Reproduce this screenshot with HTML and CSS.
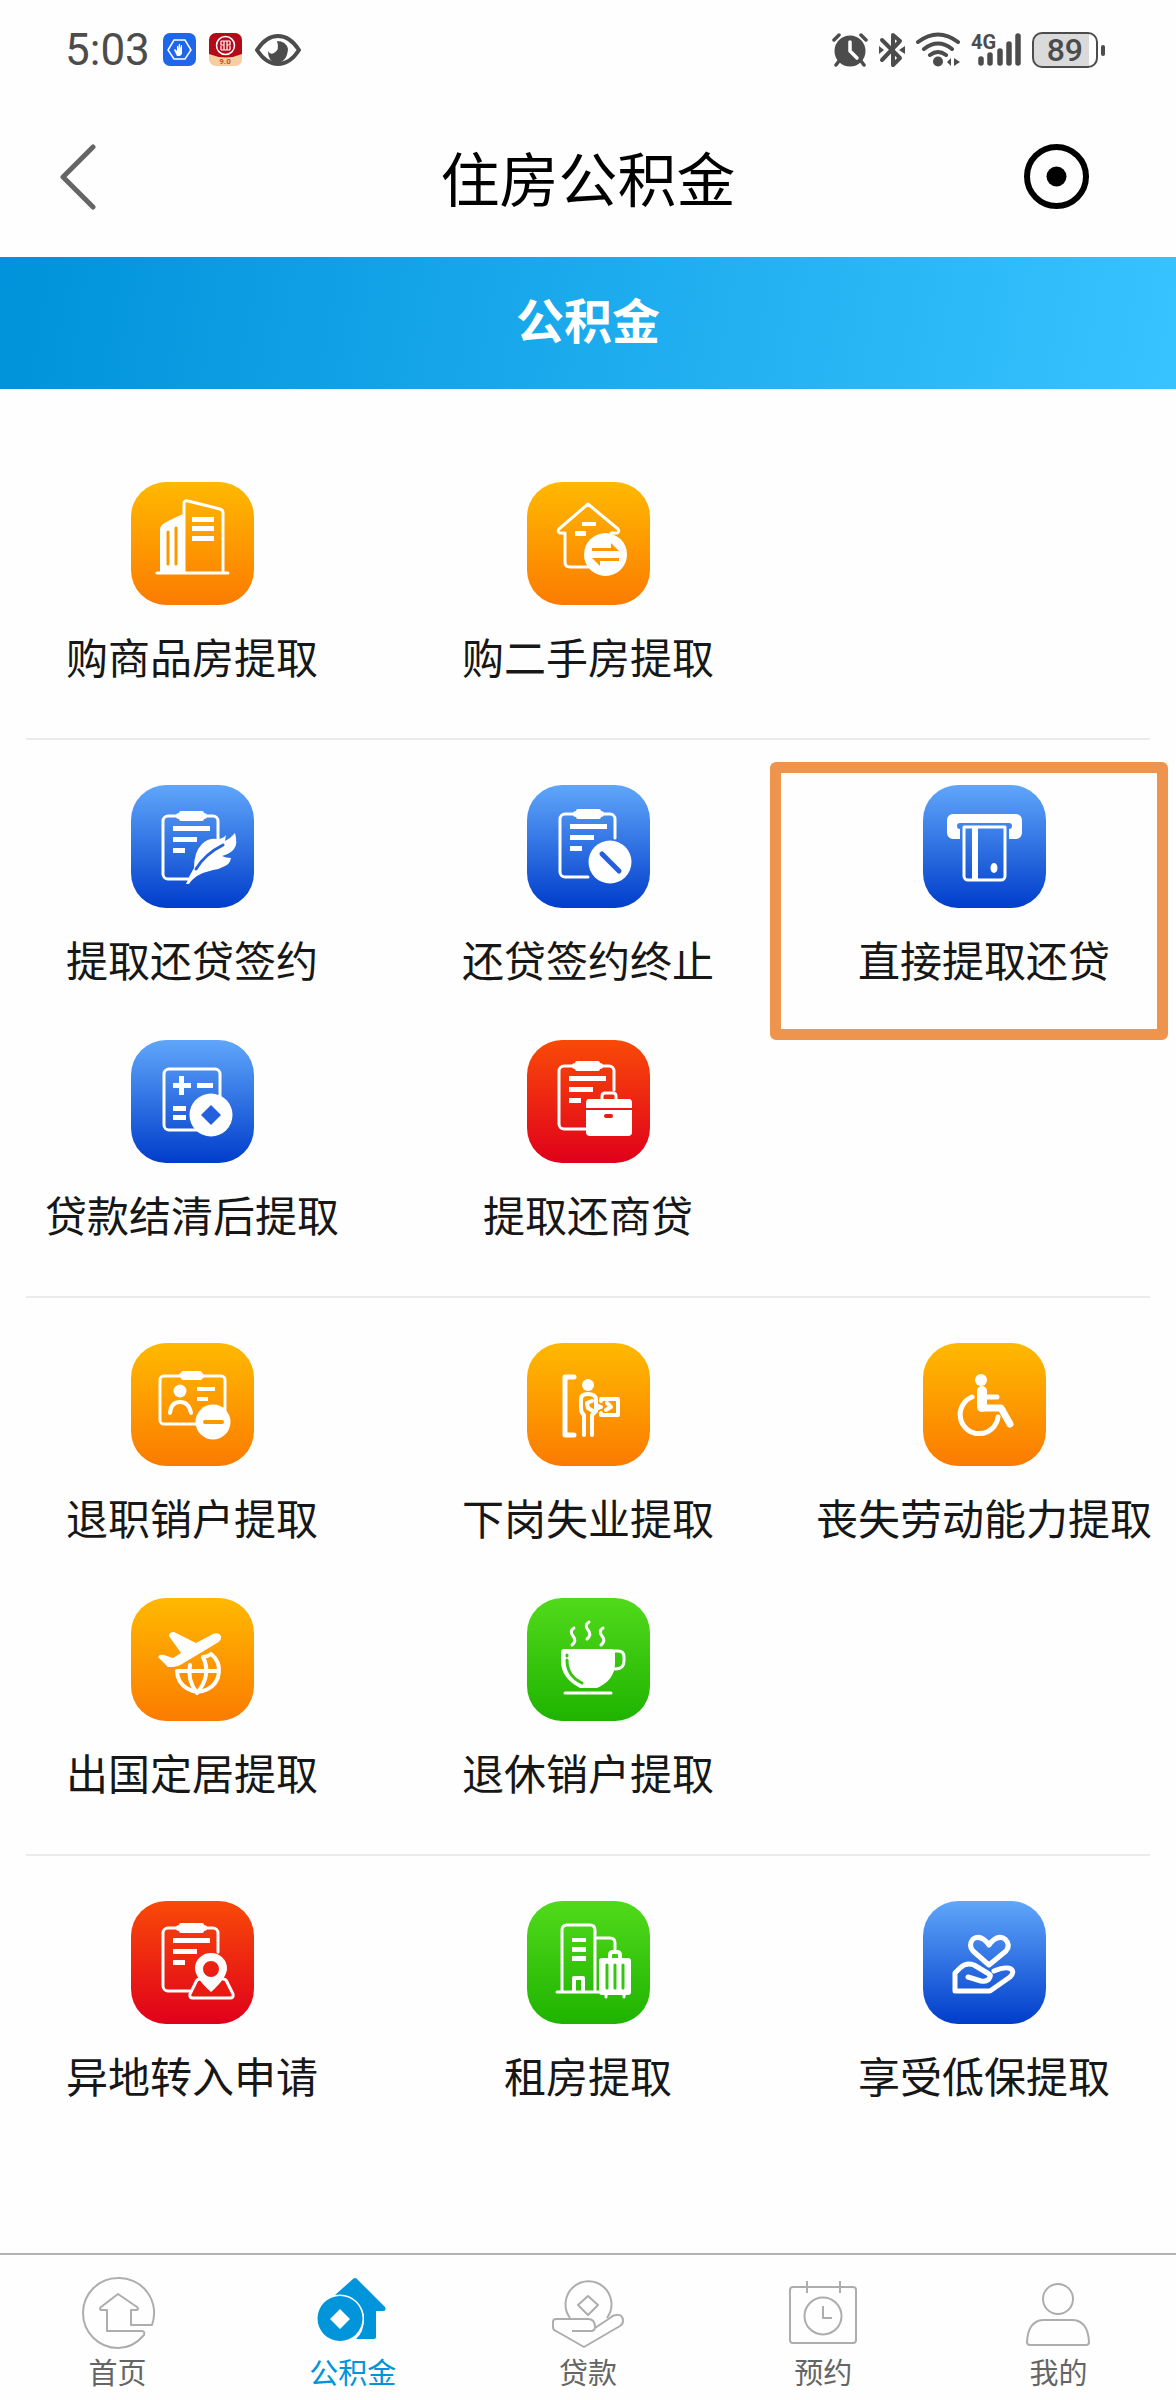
FILE: index.html
```html
<!DOCTYPE html>
<html lang="zh-CN">
<head>
    <meta charset="UTF-8">
    <meta name="viewport" content="width=device-width, initial-scale=1.0">
    <title>住房公积金</title>
    <link rel="stylesheet" href="styles.css">
</head>
<body>

<!-- 公用的剪贴板图形 -->
<svg class="sprite" aria-hidden="true">
    <symbol id="clipboard" viewBox="0 0 123 123">
        <path class="line" d="M87 55V36a5 5 0 0 0-5-5H37a5 5 0 0 0-5 5v53a5 5 0 0 0 5 5h23"/>
        <path class="fill" d="M50 26h21q2 0 2 2 3 0 3 3t-3 3q0 2-2 2H50q-2 0-2-2-3 0-3-3t3-3q0-2 2-2zM42 41h37v5H42zM42 52h24v5H42zM42 63h12v5H42z"/>
    </symbol>
</svg>

<div class="status-bar">
    <div class="status-group status-left">
        <span class="clock">5:03</span>
        <svg class="app-icon" width="33" height="33" viewBox="0 0 33 33">
            <rect width="33" height="33" rx="7" fill="#1f66ea"/>
            <path d="M11 7h11l6 10-6 9H11L5 17z" fill="none" stroke="#fff" stroke-width="1.5"/>
            <path d="M13 21l-2-4 1-1 2 2v-5h1v3l1-5h1v5l1-4h1v9l-2 2h-3z" fill="#fff"/>
        </svg>
        <svg class="app-icon" width="33" height="33" viewBox="0 0 33 33">
            <rect width="33" height="33" rx="7" fill="#f8cda0"/>
            <path d="M7 0h19a7 7 0 0 1 7 7v14q-16 7-33 0V7a7 7 0 0 1 7-7z" fill="#b20a18"/>
            <circle cx="16.500" cy="12.500" r="9" fill="none" stroke="#fff" stroke-width="1.500"/>
            <path d="M12 8h9M12 17h9M12 8v4h3v5M21 8v4h-3v5M15 8v4M18 8v4M12 13v4M21 13v4" fill="none" stroke="#fff" stroke-width="1.200"/>
            <text x="16" y="31" class="app-version">9.0</text>
        </svg>
        <svg width="46" height="32" viewBox="0 0 46 32">
            <path d="M2 16Q11 2 23 2t21 14Q35 30 23 30T2 16z" fill="none" stroke="#4c4c4c" stroke-width="4"/>
            <path d="M22 7q9 0 11 8-1 13-11 14-9-1-9-12 2 4 6 2 6-3 3-12z" fill="#4c4c4c"/>
        </svg>
    </div>
    <div class="status-group">
        <svg width="36" height="35" viewBox="0 0 36 35">
            <circle cx="18" cy="19" r="15.500" fill="#4c4c4c"/>
            <path d="M2 8l5-5M34 8l-5-5M7 29l-3 4M29 29l3 4" stroke="#4c4c4c" stroke-width="3.500" stroke-linecap="round"/>
            <path d="M18 10v9l7 7" fill="none" stroke="#fff" stroke-width="3.500" stroke-linecap="round" stroke-linejoin="round"/>
        </svg>
        <svg width="26" height="36" viewBox="0 0 26 36">
            <path d="M3 8l18 18-7 7V3l7 6L3 28" fill="none" stroke="#4c4c4c" stroke-width="4" stroke-linecap="round" stroke-linejoin="round"/>
            <path d="M0 14l5 4-5 4zM26 14l-6 4 6 4z" fill="#4c4c4c"/>
        </svg>
        <svg width="44" height="35" viewBox="0 0 44 35">
            <path d="M2 10Q22-5 42 10M8 17q14-11 28 0M14 23q8-6 16 0" fill="none" stroke="#4c4c4c" stroke-width="4" stroke-linecap="round"/>
            <circle cx="22" cy="29.500" r="5" fill="#4c4c4c"/>
            <path d="M35 26v8l-4-4zM38 26v8l6-4z" fill="#4c4c4c"/>
        </svg>
        <svg width="50" height="45" viewBox="0 -6 50 45">
            <text x="0" y="16" class="network">4G</text>
            <path d="M10 26v4M19 22v8M29 18v12M38 11v19M47 3v27" stroke="#4c4c4c" stroke-width="5.500" stroke-linecap="round"/>
        </svg>
        <div class="battery"><span class="battery-level">89</span></div>
    </div>
</div>

<header class="header">
    <button class="header-btn back" aria-label="返回">
        <svg width="36" height="66" viewBox="0 0 36 66">
            <path d="M33 3L3 33l30 30" fill="none" stroke="#656565" stroke-width="5" stroke-linecap="round" stroke-linejoin="round"/>
        </svg>
    </button>
    <h1 class="header-title">住房公积金</h1>
    <button class="header-btn" aria-label="关闭">
        <svg width="65" height="65" viewBox="0 0 65 65">
            <circle cx="32.500" cy="32.500" r="29.500" fill="none" stroke="#000" stroke-width="6"/>
            <circle cx="32.500" cy="32.500" r="10" fill="#000"/>
        </svg>
    </button>
</header>

<h2 class="banner">公积金</h2>

<main class="content">
    <section class="group">
        <a href="#" class="item">
            <svg class="icon orange" viewBox="0 0 123 123">
                <path class="fill" d="M29 90V47q0-3 3-5l7-4 13-6v58z"/>
                <path class="line" d="M53 90V22q0-4 4-3l32 8q3 1 3 4v59"/>
                <path class="fill" d="M61 35h22v5H61zM61 44h22v5H61zM61 54h22v5H61z"/>
                <path class="cut" d="M37 50v32M45 46v36" stroke-width="3"/>
                <path class="line" d="M26 91h71"/>
            </svg>
            <span class="label">购商品房提取</span>
        </a>
        <a href="#" class="item">
            <svg class="icon orange" viewBox="0 0 123 123">
                <path class="line" d="M61 85H43q-5 0-5-5V51h-5q-3-1-1-4l29-25 30 25q2 3-1 4h-6v8"/>
                <path class="fill" d="M55 40h14v4H55zM48 49h11v5H48z"/>
                <circle class="fill" cx="78.500" cy="72.500" r="21.500"/>
                <path class="cut-fill" d="M65 66h19v-5l8 8H65zM92 76H65l8 8v-5h19z"/>
            </svg>
            <span class="label">购二手房提取</span>
        </a>
    </section>

    <section class="group">
        <a href="#" class="item">
            <svg class="icon blue" viewBox="0 0 123 123">
                <use href="#clipboard"/>
                <path class="fill" d="M55 99q3-8 8-16 0-16 8-24 6-6 15-5 6 0 9-4l-1 6q6-3 10-8 3 11-1 16-4 5-12 7 4 2 9 2-1 6-6 8-5 3-12 4-9 2-16 6-5 3-8 8z"/>
                <path class="cut" d="M65 84q9-15 27-24" stroke-width="3"/>
            </svg>
            <span class="label">提取还贷签约</span>
        </a>
        <a href="#" class="item">
            <svg class="icon blue" viewBox="0 0 123 123">
                <use href="#clipboard" x="1" y="-2"/>
                <circle class="fill" cx="83" cy="77" r="21.500"/>
                <path class="cut" d="M75 69l17 17" stroke-width="5"/>
            </svg>
            <span class="label">还贷签约终止</span>
        </a>
        <a href="#" class="item highlight">
            <svg class="icon blue" viewBox="0 0 123 123">
                <path class="fill" d="M30 29h63a6 6 0 0 1 6 6v13a6 6 0 0 1-6 6h-7V44q3 0 3-3t-3-3H37q-3 0-3 3t3 3v10h-7a6 6 0 0 1-6-6V35a6 6 0 0 1 6-6z"/>
                <path class="line" d="M41 42h41v49a4 4 0 0 1-4 4H45a4 4 0 0 1-4-4z"/>
                <path class="fill" d="M49 42h6v54h-6z"/>
                <ellipse class="fill" cx="71" cy="83" rx="3.500" ry="5"/>
            </svg>
            <span class="label">直接提取还贷</span>
        </a>
        <a href="#" class="item">
            <svg class="icon blue" viewBox="0 0 123 123">
                <rect class="line" x="33" y="29" width="56" height="61" rx="5"/>
                <path class="fill" d="M42 43h6v-7h5v7h7v5h-7v7h-5v-7h-6zM66 43h16v5H66zM42 66h13v5H42zM42 75h13v5H42z"/>
                <circle class="fill" cx="80" cy="75" r="21.500"/>
                <path class="cut-fill" d="M80 65l10 10-10 10-10-10z"/>
            </svg>
            <span class="label">贷款结清后提取</span>
        </a>
        <a href="#" class="item">
            <svg class="icon red" viewBox="0 0 123 123">
                <use href="#clipboard" y="-5"/>
                <path class="line" d="M75 59v-3q0-3 3-3h8q3 0 3 3v3"/>
                <path class="fill" d="M62 59h40q3 0 3 4v29q0 4-4 4H63q-4 0-4-4V63q0-4 3-4z"/>
                <path class="cut" d="M58 69h48" stroke-width="2"/>
                <path class="cut" d="M79 76h5" stroke-width="4"/>
            </svg>
            <span class="label">提取还商贷</span>
        </a>
    </section>

    <section class="group">
        <a href="#" class="item">
            <svg class="icon orange" viewBox="0 0 123 123">
                <rect class="line" x="29" y="33" width="65" height="48" rx="4"/>
                <path class="fill" d="M52 28h17q2 0 2 2 2 1 2 3t-2 3q0 1-2 1H52q-2 0-2-2-2-1-2-3t2-2q0-2 2-2zM66 44h18v4H66zM66 54h11v4H66z"/>
                <circle class="fill" cx="49" cy="48" r="6.500"/>
                <path class="line" d="M39 70q1-11 10-11t11 11" stroke-width="4"/>
                <circle class="fill" cx="82" cy="79" r="17.500"/>
                <path class="cut" d="M74 79h17" stroke-width="4"/>
            </svg>
            <span class="label">退职销户提取</span>
        </a>
        <a href="#" class="item">
            <svg class="icon orange" viewBox="0 0 123 123">
                <path class="line" d="M47 34H38v58h9" stroke-width="5"/>
                <circle class="fill" cx="61" cy="42" r="6"/>
                <path class="line" d="M57 92V72q-3-2-3-7V56q0-5 7-5t8 5v12l-4 4v20M65 58l-5 2 1 5 5 3" stroke-width="4"/>
                <path class="line" d="M69 62l5 2-5 2M74 58v-2h17v16H74v-2M80 60l4 4-5 3" stroke-width="4"/>
            </svg>
            <span class="label">下岗失业提取</span>
        </a>
        <a href="#" class="item">
            <svg class="icon orange" viewBox="0 0 123 123">
                <circle class="fill" cx="58" cy="37" r="6"/>
                <path class="line" d="M59 48v16" stroke-width="10"/>
                <path class="line" d="M59 65h19l9 16" stroke-width="7"/>
                <path class="line" d="M60 54h14M49 54a19 19 0 1 0 26 20" stroke-width="5"/>
            </svg>
            <span class="label">丧失劳动能力提取</span>
        </a>
        <a href="#" class="item">
            <svg class="icon orange" viewBox="0 0 123 123">
                <path class="fill" d="M38 38q0-4 5-4l22 11 17-9q6-2 8 2 1 4-4 7L51 66q-4 3-9 3h-5L27 59q1-3 6-2l9 3 8-5z"/>
                <path class="line" d="M46 73a21 21 0 1 0 34-17M47 73h41M59 67q-3 15 7 28M72 59q9 18-6 36M80 56q-4 3-8 3" stroke-width="4"/>
            </svg>
            <span class="label">出国定居提取</span>
        </a>
        <a href="#" class="item">
            <svg class="icon green" viewBox="0 0 123 123">
                <path class="fill" d="M37 51h47q4 0 4 4v10q0 17-18 25H53Q34 80 34 63v-8q0-4 3-4z"/>
                <path class="line" d="M87 53h4q6 0 6 6v4q0 8-9 8"/>
                <path class="cut" d="M40 57v1M40 62q0 16 15 23" stroke-width="3"/>
                <path class="line" d="M38 95h46"/>
                <path class="line" d="M47 30q-5 3-1 8t-1 9M62 24q-5 3-1 8t-1 9M76 30q-5 3-1 8t-1 9"/>
            </svg>
            <span class="label">退休销户提取</span>
        </a>
    </section>

    <section class="group">
        <a href="#" class="item">
            <svg class="icon red" viewBox="0 0 123 123">
                <use href="#clipboard" y="-4"/>
                <path class="cut-fill" d="M66 78l-8 16q-1 4 3 4h38q5 0 3-5l-7-15z"/>
                <path class="line" d="M69 78q-3 0-4 3l-6 12q-1 4 3 4h37q4 0 3-4l-6-12q-1-3-4-3"/>
                <path class="fill" fill-rule="evenodd" d="M80 91Q64 77 64 67a16 15 0 0 1 32 0q0 10-16 24zM80 60a8 8 0 1 0 0 16 8 8 0 1 0 0-16z"/>
            </svg>
            <span class="label">异地转入申请</span>
        </a>
        <a href="#" class="item">
            <svg class="icon green" viewBox="0 0 123 123">
                <path class="line" d="M30 91h42M35 90V29q0-5 5-5h23q5 0 5 5v61M69 37h14q5 0 5 5v8"/>
                <path class="fill" d="M45 37h14v4H45zM45 46h14v5H45zM45 55h14v5H45z"/>
                <path class="line" d="M47 90V77h9v13M83 58v-4q0-3 3-3h4q3 0 3 3v4" stroke-width="4"/>
                <rect class="fill" x="72" y="57" width="32" height="37" rx="3"/>
                <path class="cut" d="M80 64v23M88 64v23M96 64v23" stroke-width="3"/>
                <path class="line" d="M79 94v2M97 94v2"/>
            </svg>
            <span class="label">租房提取</span>
        </a>
        <a href="#" class="item">
            <svg class="icon blue" viewBox="0 0 123 123">
                <path class="line" d="M66 64L50 50q-5-6 0-12 8-5 16 6 8-11 16-6 6 6 1 12z" stroke-width="5"/>
                <path class="line" d="M45 76l13 4q7 1 9-4 1-2-1-3L51 64q-8-3-14 3l-5 5v18h35l20-14q5-5 1-8-5-3-17 2" stroke-width="5"/>
            </svg>
            <span class="label">享受低保提取</span>
        </a>
    </section>
</main>

<nav class="tabbar">
    <a href="#" class="tab">
        <svg class="tab-icon" viewBox="0 0 72 72">
            <path d="M70 48A35 35 0 0 0 36 1 35 35 0 0 0 1 36 35 35 0 0 0 36 71q15 0 26-13 1-4-2-4H25V33h-6q-2-1 0-3l17-13 19 13q2 2 0 3h-6v15z"/>
        </svg>
        <span>首页</span>
    </a>
    <a href="#" class="tab active">
        <svg class="tab-icon" viewBox="0 0 72 72">
            <path class="solid" d="M18 18L36 2q2-2 4 0l28 28q2 4-2 4h-7v26q0 2-2 2H39q8-7 8-20 0-20-29-24z"/>
            <path class="solid" fill-rule="evenodd" d="M23 19a22 22 0 1 0 0 45 22 22 0 1 0 0-45zM23 32l10 10-10 10-10-10z"/>
        </svg>
        <span>公积金</span>
    </a>
    <a href="#" class="tab">
        <svg class="tab-icon" viewBox="0 0 72 72">
            <path d="M18 41a23 23 0 1 1 37 0M36 19l10 9-10 10-10-10z"/>
            <path d="M20 54h19q4 0 4-4 0-8-7-8H4q-3 0-3 3v5q0 3 3 4l28 16 36-21q3-2 3-5 0-7-7-6-3 0-6 3L43 51"/>
        </svg>
        <span>贷款</span>
    </a>
    <a href="#" class="tab">
        <svg class="tab-icon" viewBox="0 0 72 72">
            <rect x="3" y="10" width="66" height="56" rx="3"/>
            <path d="M20 4v12M53 4v12M36 29v12h9"/>
            <circle cx="36" cy="39" r="18.500"/>
        </svg>
        <span>预约</span>
    </a>
    <a href="#" class="tab">
        <svg class="tab-icon" viewBox="0 0 72 72">
            <circle cx="36" cy="22" r="15"/>
            <path d="M5 65q1-21 16-22h30q15 1 16 22 0 3-3 3H8q-3 0-3-3z"/>
        </svg>
        <span>我的</span>
    </a>
</nav>

</body>
</html>
```
FILE: styles.css
```css
:root {
    --text: #171717;
    --status: #4c4c4c;
    --accent: #0095da;
    --tab-grey: #adadad;
    --mark: #ef944d;
}

* {
    box-sizing: border-box;
    margin: 0;
    padding: 0;
}

body {
    display: flex;
    flex-direction: column;
    min-height: 100vh;
    font-family: "Noto Sans CJK SC", sans-serif;
    background-color: #fefefe;
    color: var(--text);
}

a {
    color: inherit;
    text-decoration: none;
}

.sprite {
    display: none;
}

/* 状态栏 */
.status-bar {
    display: flex;
    justify-content: space-between;
    align-items: center;
    height: 99px;
    padding: 0 71px 0 65px;
    color: var(--status);
    font-family: Roboto, sans-serif;
}

.status-group {
    display: flex;
    align-items: center;
    gap: 11px;
}

.status-left {
    gap: 13px;
}

.clock {
    font-size: 44px;
    line-height: 48px;
}

.app-version {
    font-size: 8px;
    font-weight: 700;
    fill: #c4522c;
    text-anchor: middle;
}

.network {
    font-size: 20px;
    font-weight: 700;
    fill: var(--status);
}

.battery {
    position: relative;
    display: flex;
    margin-right: 7px;
    border: 2px solid var(--status);
    border-radius: 10px;
    background: linear-gradient(90deg, #dadada 88%, #fff 88%);
}

.battery::after {
    content: "";
    position: absolute;
    top: 11px;
    right: -9px;
    width: 4px;
    height: 11px;
    border-radius: 2px;
    background-color: var(--status);
}

.battery-level {
    padding: 0 13px;
    font-size: 32px;
    font-weight: 500;
    line-height: 32px;
}

/* 标题栏 */
.header {
    display: flex;
    align-items: center;
    height: 158px;
    padding: 0 87px 3px 60px;
}

.header-btn {
    display: flex;
    border: none;
    background: none;
    cursor: pointer;
}

.back {
    width: 92px;
}

.header-title {
    flex: 1;
    color: #000;
    font-size: 59px;
    font-weight: 400;
    line-height: 80px;
    text-align: center;
}

.banner {
    padding: 29px 0 39px;
    background: linear-gradient(100deg, #0092da, #37c3ff);
    color: #fff;
    font-size: 48px;
    font-weight: 700;
    line-height: 64px;
    text-align: center;
}

/* 业务列表 */
.content {
    flex: 1;
    padding: 48px 26px;
}

.group {
    display: grid;
    grid-template-columns: repeat(3, minmax(0, 1fr));
    gap: 53px 64px;
    padding: 45px 0 54px;
}

.group + .group {
    border-top: 2px solid #ebebeb;
}

.item {
    position: relative;
    display: flex;
    flex-direction: column;
    align-items: center;
    gap: 23px;
}

.highlight::after {
    content: "";
    position: absolute;
    inset: -23px -18px -53px -48px;
    border: 11px solid var(--mark);
    border-radius: 6px;
    pointer-events: none;
}

.label {
    font-size: 42px;
    line-height: 56px;
    white-space: nowrap;
}

.icon {
    width: 123px;
    height: 123px;
    border-radius: 35px;
}

.orange {
    --cut: #fc9800;
    background: linear-gradient(#ffb900, #fb7b00);
}

.blue {
    --cut: #2460dc;
    background: linear-gradient(#60a6fa, #003dcb);
}

.red {
    --cut: #e91a12;
    background: linear-gradient(#f94a08, #e0001b);
}

.green {
    --cut: #36c611;
    background: linear-gradient(#51da1b, #1fb300);
}

.fill {
    fill: #fff;
}

.line {
    fill: none;
    stroke: #fff;
    stroke-linecap: round;
    stroke-linejoin: round;
}

.line:not([stroke-width]) {
    stroke-width: 3px;
}

.cut {
    fill: none;
    stroke: var(--cut);
    stroke-linecap: round;
}

.cut-fill {
    fill: var(--cut);
}

/* 底部导航 */
.tabbar {
    display: grid;
    grid-template-columns: repeat(5, 1fr);
    padding: 22px 0 9px;
    border-top: 2px solid #b4b4b4;
}

.tab {
    display: flex;
    flex-direction: column;
    align-items: center;
    gap: 2px;
    color: #656565;
    font-size: 29px;
    line-height: 40px;
}

.tab-icon {
    width: 72px;
    height: 72px;
    overflow: visible;
    fill: none;
    stroke: var(--tab-grey);
    stroke-width: 2px;
    stroke-linejoin: round;
}

.tab .solid {
    fill: var(--accent);
    stroke: none;
}

/* 选中图标里圆币与房子之间的白边 */
.tab .solid + .solid {
    stroke: #fefefe;
    stroke-width: 3px;
    paint-order: stroke;
}

.tab.active {
    color: var(--accent);
}
```
